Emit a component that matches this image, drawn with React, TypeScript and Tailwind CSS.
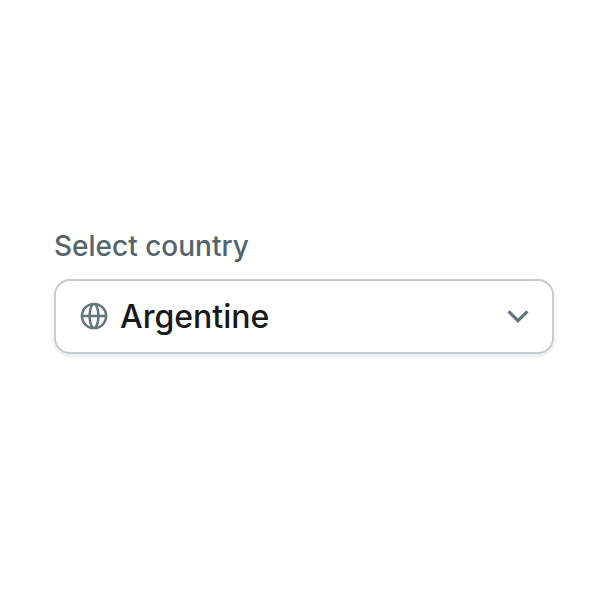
export default function App() {
  return (
    <main className="h-[600px] w-[600px] bg-white pl-[54px] pt-[229px] font-['Inter',sans-serif]">
      <label id="country-label" className="block h-[34px] text-[28px] leading-[34px] font-[450] tracking-normal text-[#54646d]">
        Select country
      </label>
      <button
        type="button"
        aria-labelledby="country-label"
        className="mt-4 flex h-[75px] w-[500px] items-center rounded-[16px] border-2 border-[#c6ced2] bg-white pl-6 pr-[22px] shadow-[0_2px_4px_rgba(20,24,28,0.1)]"
      >
        <svg className="mb-px size-7 shrink-0" viewBox="0 0 28 28" fill="none" stroke="#64757f" strokeWidth="2.5">
          <circle cx="14" cy="14" r="12.1" />
          <path d="M12.700 2.200C10.600 4.900 9.600 9.200 9.600 14s1 9.100 3.100 11.800M15.300 2.200C17.400 4.900 18.400 9.200 18.400 14s-1 9.100-3.100 11.800M1.900 14h24.200" />
        </svg>
        <span className="ml-3 flex-1 text-left text-[32px] font-[480] leading-10 tracking-normal text-[#17191a]">Argentine</span>
        <svg className="mb-[2px] h-[14px] w-6 shrink-0" viewBox="0 0 24 14" fill="none" stroke="#64757f" strokeWidth="3.1">
          <path d="m2.600 2.300 9.400 9.400L21.400 2.300" />
        </svg>
      </button>
    </main>
  );
}
